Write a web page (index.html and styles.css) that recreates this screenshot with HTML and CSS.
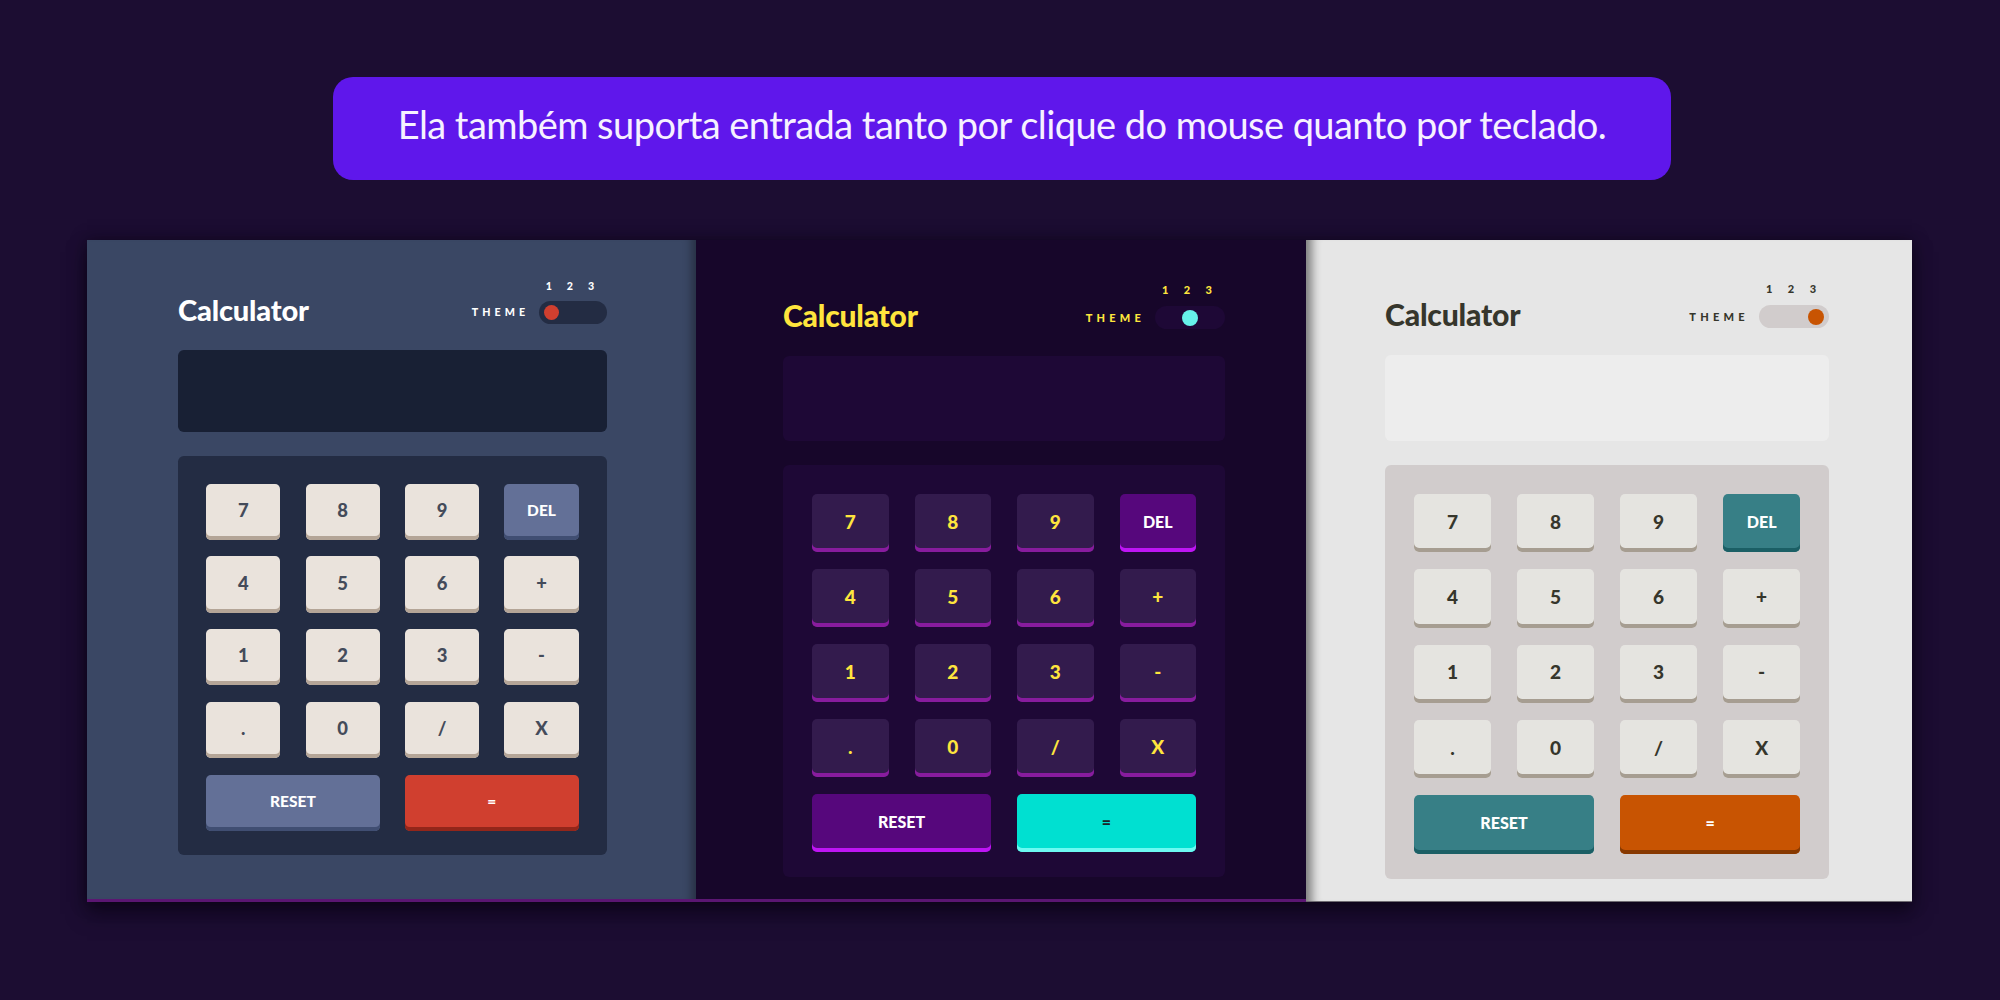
FILE: index.html
```html
<!DOCTYPE html>
<html lang="pt">
<head>
<meta charset="utf-8">
<title>Calculator themes</title>
<link rel="stylesheet" href="styles.css">
</head>
<body>
<div class="banner">Ela também suporta entrada tanto por clique do mouse quanto por teclado.</div>
<div class="showcase">
  <section class="panel t1">
    <div class="calc">
      <div class="head">
        <h1 class="title">Calculator</h1>
        <div class="theme">
          <span class="theme-label">THEME</span>
          <div class="switch">
            <div class="nums"><span>1</span><span>2</span><span>3</span></div>
            <div class="toggle"><span class="knob"></span></div>
          </div>
        </div>
      </div>
      <div class="screen"></div>
      <div class="keypad">
        <button class="key">7</button><button class="key">8</button><button class="key">9</button><button class="key alt small">DEL</button>
        <button class="key">4</button><button class="key">5</button><button class="key">6</button><button class="key">+</button>
        <button class="key">1</button><button class="key">2</button><button class="key">3</button><button class="key">-</button>
        <button class="key">.</button><button class="key">0</button><button class="key">/</button><button class="key">x</button>
        <button class="key alt small wide">RESET</button><button class="key eq small wide">=</button>
      </div>
    </div>
  </section>
  <section class="panel t3">
    <div class="calc">
      <div class="head">
        <h1 class="title">Calculator</h1>
        <div class="theme">
          <span class="theme-label">THEME</span>
          <div class="switch">
            <div class="nums"><span>1</span><span>2</span><span>3</span></div>
            <div class="toggle"><span class="knob"></span></div>
          </div>
        </div>
      </div>
      <div class="screen"></div>
      <div class="keypad">
        <button class="key">7</button><button class="key">8</button><button class="key">9</button><button class="key alt small">DEL</button>
        <button class="key">4</button><button class="key">5</button><button class="key">6</button><button class="key">+</button>
        <button class="key">1</button><button class="key">2</button><button class="key">3</button><button class="key">-</button>
        <button class="key">.</button><button class="key">0</button><button class="key">/</button><button class="key">x</button>
        <button class="key alt small wide">RESET</button><button class="key eq small wide">=</button>
      </div>
    </div>
  </section>
  <section class="panel t2">
    <div class="calc">
      <div class="head">
        <h1 class="title">Calculator</h1>
        <div class="theme">
          <span class="theme-label">THEME</span>
          <div class="switch">
            <div class="nums"><span>1</span><span>2</span><span>3</span></div>
            <div class="toggle"><span class="knob"></span></div>
          </div>
        </div>
      </div>
      <div class="screen"></div>
      <div class="keypad">
        <button class="key">7</button><button class="key">8</button><button class="key">9</button><button class="key alt small">DEL</button>
        <button class="key">4</button><button class="key">5</button><button class="key">6</button><button class="key">+</button>
        <button class="key">1</button><button class="key">2</button><button class="key">3</button><button class="key">-</button>
        <button class="key">.</button><button class="key">0</button><button class="key">/</button><button class="key">x</button>
        <button class="key alt small wide">RESET</button><button class="key eq small wide">=</button>
      </div>
    </div>
  </section>
</div>
</body>
</html>
```
FILE: styles.css
```css
* { box-sizing: border-box; }
html, body { margin: 0; padding: 0; }
body {
  width: 2000px;
  height: 1000px;
  overflow: hidden;
  background: #1c0d32;
  font-family: "Lato", "Liberation Sans", sans-serif;
}
.banner {
  margin: 77px 0 0 333px;
  width: 1338px;
  height: 103px;
  border-radius: 20px;
  background: #5f17eb;
  color: #f6f1ff;
  font-size: 38px;
  letter-spacing: -0.55px;
  display: flex;
  align-items: center;
  justify-content: center;
  padding-bottom: 10px;
}
.showcase {
  display: flex;
  margin: 60px 0 0 87px;
  width: 1825px;
  box-shadow: 0 12px 18px rgba(8, 2, 16, 0.55), 0 0 14px rgba(8, 2, 16, 0.5);
}
.panel {
  height: 662px;
  flex: none;
}
.t1 {
  width: 609px;
  background: #3a4764;
  padding: 40px 0 0 91px;
  border-bottom: 3px solid #5b1672;
  box-shadow: inset -12px 0 10px -8px rgba(0, 0, 0, 0.35);
}
.t3 {
  width: 610px;
  background: #17062a;
  padding: 44px 0 0 87px;
  border-bottom: 3px solid #5b1672;
}
.t2 {
  width: 606px;
  background: #e6e6e6;
  padding: 43px 0 0 79px;
  border-bottom: 1px solid #6f6b72;
  box-shadow: inset 14px 0 10px -8px rgba(0, 0, 0, 0.45);
}
.calc {
  width: 442px;
}
.t1 .calc { zoom: 0.97; }
.t2 .calc { zoom: 1.005; }

.head {
  display: flex;
  justify-content: space-between;
  align-items: flex-end;
}
.title {
  margin: 0;
  font-size: 30px;
  font-weight: 900;
  line-height: 18px;
  height: 23px;
  letter-spacing: -0.2px;
}
.theme {
  display: flex;
  align-items: flex-end;
  gap: 10px;
}
.theme-label {
  font-size: 11px;
  font-weight: 900;
  letter-spacing: 4.2px;
  line-height: 23px;
}
.switch {
  width: 70px;
  display: flex;
  flex-direction: column;
}
.nums {
  display: flex;
  justify-content: space-between;
  padding: 0 13px 0 7px;
  height: 12px;
  line-height: 12px;
  font-size: 11px;
  font-weight: 900;
  margin-bottom: 10px;
}
.toggle {
  height: 23px;
  border-radius: 12px;
  padding: 0 5px;
  display: flex;
  align-items: center;
}
.knob {
  width: 16px;
  height: 16px;
  border-radius: 50%;
}
.t3 .toggle { justify-content: center; }
.t2 .toggle { justify-content: flex-end; }

.screen {
  margin-top: 27px;
  height: 85px;
  border-radius: 6px;
}
.keypad {
  margin-top: 24px;
  border-radius: 6px;
  padding: 29px 29px 25px 29px;
  display: grid;
  grid-template-columns: repeat(4, 1fr);
  column-gap: 26px;
  row-gap: 17px;
}
.key {
  height: 58px;
  border: 0;
  border-radius: 5px;
  padding: 0 0 4px 0;
  font-family: "Lato", "Liberation Sans", sans-serif;
  font-size: 19px;
  font-weight: 900;
  text-transform: uppercase;
  cursor: pointer;
}
.key.small { font-size: 16px; }
.key.wide { grid-column: span 2; }

/* theme 1 */
.t1 .title, .t1 .theme-label, .t1 .nums { color: #ffffff; }
.t1 .toggle, .t1 .keypad { background: #232c43; }
.t1 .knob { background: #d03f2f; }
.t1 .screen { background: #182034; }
.t1 .key { background: #eae3dc; color: #444b5a; box-shadow: inset 0 -4px 0 #b4a597; }
.t1 .key.alt { background: #637097; color: #fff; box-shadow: inset 0 -4px 0 #404e72; }
.t1 .key.eq { background: #d03f2f; color: #fff; box-shadow: inset 0 -4px 0 #93261a; }

/* theme 3 (purple) */
.t3 .title, .t3 .theme-label, .t3 .nums { color: #ffe53d; }
.t3 .toggle, .t3 .keypad, .t3 .screen { background: #1e0836; }
.t3 .knob { background: #66f2ea; }
.t3 .key { background: #331b4d; color: #ffe53d; box-shadow: inset 0 -4px 0 #881c9e; }
.t3 .key.alt { background: #56077c; color: #fff; box-shadow: inset 0 -4px 0 #be15f4; }
.t3 .key.eq { background: #00e0d1; color: #1a2327; box-shadow: inset 0 -4px 0 #6cf9f1; }

/* theme 2 (light) */
.t2 .title, .t2 .theme-label, .t2 .nums { color: #36362c; }
.t2 .toggle, .t2 .keypad { background: #d1cccc; }
.t2 .screen { background: #ededed; }
.t2 .knob { background: #c85402; }
.t2 .key { background: #e5e4e0; color: #36362c; box-shadow: inset 0 -4px 0 #a69d91; }
.t2 .key.alt { background: #377f86; color: #fff; box-shadow: inset 0 -4px 0 #1b5f65; }
.t2 .key.eq { background: #c85402; color: #fff; box-shadow: inset 0 -4px 0 #873901; }
```
